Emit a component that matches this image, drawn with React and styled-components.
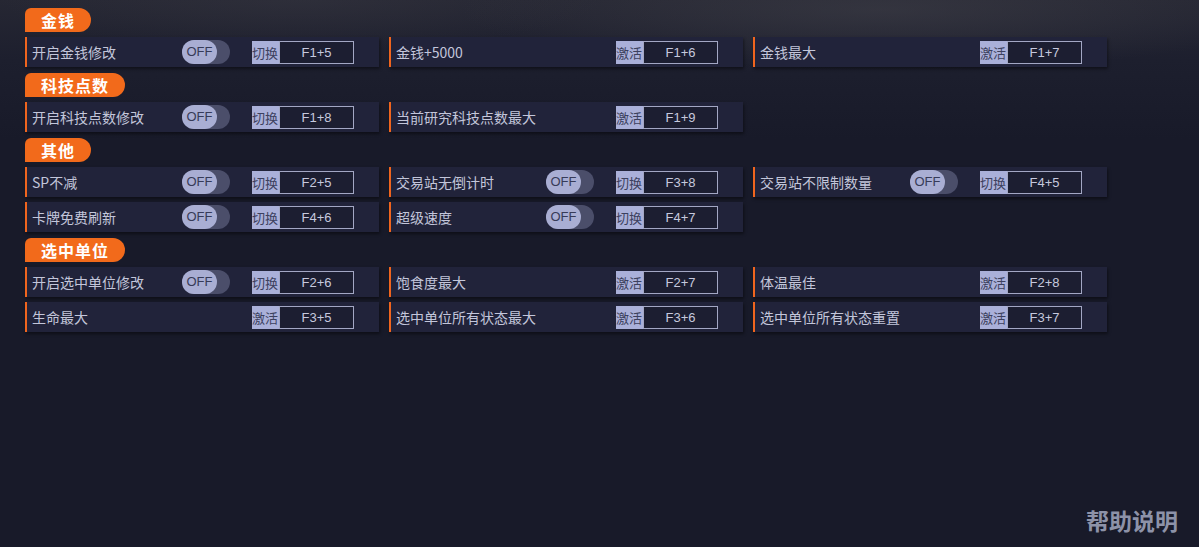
import React from 'react'
import styled, { createGlobalStyle } from 'styled-components'

const GlobalStyle = createGlobalStyle`
  html, body, #root { margin: 0; padding: 0; height: 100%; }
  body {
    font-family: "Microsoft YaHei", "Noto Sans CJK SC", "Noto Sans", sans-serif;
    background: #181a29;
  }
`

const Page = styled.div`
  min-height: 100vh;
  box-sizing: border-box;
  padding: 8px 0 10px 25px;
  display: flex;
  flex-direction: column;
  background:
    radial-gradient(ellipse 420px 60px at 880px 10px, rgba(70, 70, 78, 0.45), transparent),
    radial-gradient(ellipse 300px 50px at 300px 0px, rgba(60, 60, 70, 0.35), transparent),
    linear-gradient(180deg, #262733 0px, #1d1f2e 60px, #181a29 140px, #181a29 100%);
`

const Section = styled.section`
  display: flex;
  flex-direction: column;
  align-items: flex-start;
  gap: 5px;
  margin-bottom: 6px;
`

const Header = styled.div`
  height: 24px;
  line-height: 24px;
  padding: 0 16px;
  background: #f26a1b;
  color: #fff;
  font-size: 16px;
  font-weight: bold;
  letter-spacing: 1px;
  border-radius: 6px 12px 12px 0;
`

const Grid = styled.div`
  display: grid;
  grid-template-columns: repeat(3, 354px);
  column-gap: 10px;
  row-gap: 5px;
`

const Row = styled.div`
  height: 30px;
  box-sizing: border-box;
  display: grid;
  grid-template-columns: 150px 70px auto;
  align-items: center;
  padding-left: 5px;
  background: #21233a;
  border-left: 2px solid #f0651e;
  box-shadow: 1px 2px 3px rgba(0, 0, 0, 0.45);
`

const Label = styled.span`
  color: #c3c6da;
  font-size: 14px;
  white-space: nowrap;
`

const Toggle = styled.div`
  width: 48px;
  height: 24px;
  border-radius: 12px;
  background: #4b4e6a;
  position: relative;
`

const Knob = styled.span`
  position: absolute;
  left: 0;
  top: 0;
  width: 35px;
  height: 24px;
  border-radius: 12px;
  background: #a9aed3;
  color: #373b58;
  font-size: 13px;
  font-family: "Liberation Sans", Arial, sans-serif;
  line-height: 24px;
  text-align: center;
`

const Key = styled.div`
  grid-column: 3;
  display: flex;
  height: 23px;
`

const KeyType = styled.span`
  width: 27px;
  background: #aab0d9;
  color: #3c405e;
  font-size: 13px;
  line-height: 23px;
  text-align: left;
  white-space: nowrap;
  overflow: hidden;
`

const KeyBox = styled.span`
  width: 75px;
  box-sizing: border-box;
  border: 1px solid #a3a7c4;
  color: #c6c9de;
  font-size: 13px;
  font-family: "Liberation Sans", Arial, sans-serif;
  line-height: 21px;
  text-align: center;
  background: #1c1e31;
`

const Help = styled.div`
  margin-top: auto;
  align-self: flex-end;
  margin-right: 21px;
  color: #8d92a8;
  font-size: 23px;
  font-weight: bold;
`

const sections = [
  {
    title: '金钱',
    items: [
      { label: '开启金钱修改', toggle: true, key: 'F1+5' },
      { label: '金钱+5000', key: 'F1+6' },
      { label: '金钱最大', key: 'F1+7' },
    ],
  },
  {
    title: '科技点数',
    items: [
      { label: '开启科技点数修改', toggle: true, key: 'F1+8' },
      { label: '当前研究科技点数最大', key: 'F1+9' },
    ],
  },
  {
    title: '其他',
    items: [
      { label: 'SP不减', toggle: true, key: 'F2+5' },
      { label: '交易站无倒计时', toggle: true, key: 'F3+8' },
      { label: '交易站不限制数量', toggle: true, key: 'F4+5' },
      { label: '卡牌免费刷新', toggle: true, key: 'F4+6' },
      { label: '超级速度', toggle: true, key: 'F4+7' },
    ],
  },
  {
    title: '选中单位',
    items: [
      { label: '开启选中单位修改', toggle: true, key: 'F2+6' },
      { label: '饱食度最大', key: 'F2+7' },
      { label: '体温最佳', key: 'F2+8' },
      { label: '生命最大', key: 'F3+5' },
      { label: '选中单位所有状态最大', key: 'F3+6' },
      { label: '选中单位所有状态重置', key: 'F3+7' },
    ],
  },
]

const CheatRow = ({ item }) => (
  <Row>
    <Label>{item.label}</Label>
    {item.toggle && (
      <Toggle>
        <Knob>OFF</Knob>
      </Toggle>
    )}
    <Key>
      <KeyType>{item.toggle ? '切换' : '激活'}</KeyType>
      <KeyBox>{item.key}</KeyBox>
    </Key>
  </Row>
)

const App = () => {
  return (
    <Page>
      <GlobalStyle />
      {sections.map(s => (
        <Section key={s.title}>
          <Header>{s.title}</Header>
          <Grid>
            {s.items.map(i => <CheatRow key={i.label} item={i} />)}
          </Grid>
        </Section>
      ))}
      <Help>帮助说明</Help>
    </Page>
  )
}

export default App
